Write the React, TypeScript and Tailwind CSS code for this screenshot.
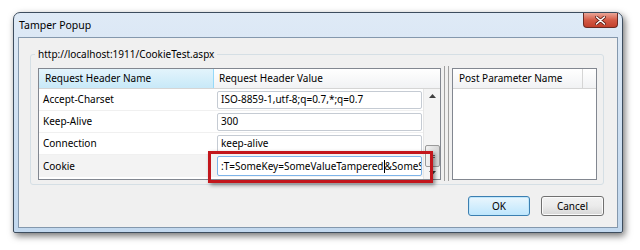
import React from "react";

const rows = [
  { name: "Accept-Charset", value: "ISO-8859-1,utf-8;q=0.7,*;q=0.7" },
  { name: "Keep-Alive", value: "300" },
  { name: "Connection", value: "keep-alive" },
];

export default function App() {
  return (
    <div className="relative w-[640px] h-[250px] bg-white overflow-hidden font-['Noto_Sans',sans-serif] text-[10px] text-black">
      {/* Window */}
      <div className="absolute left-[13px] top-[12px] w-[610px] h-[221px] rounded-t-[7px] rounded-b-[2px] border border-[#3d4d5e] bg-gradient-to-b from-[#dfeaf6] via-[#cfe0f2] to-[#c2d8ee] shadow-[2px_3px_7px_rgba(0,0,0,0.55)] flex flex-col">
        {/* Title bar */}
        <div className="h-[24px] flex items-start justify-between">
          <div className="pl-[5px] pt-[5px] text-[10.5px] leading-[14px] text-black">Tamper Popup</div>
          <div className="mr-[4px] w-[35px] h-[15px] rounded-b-[4px] border border-t-0 border-[#6b2a22] bg-gradient-to-b from-[#e9a597] via-[#d45a45] to-[#c2402c] flex items-center justify-center">
            <svg width="11" height="9" viewBox="0 0 11 9">
              <path d="M1.5 1 L9.5 8 M9.5 1 L1.5 8" stroke="#5a1a12" strokeWidth="3" strokeLinecap="round" />
              <path d="M1.5 1 L9.5 8 M9.5 1 L1.5 8" stroke="#ffffff" strokeWidth="1.6" strokeLinecap="round" />
            </svg>
          </div>
        </div>
        {/* Client */}
        <div className="mx-[4px] mb-[4px] flex-1 border border-[#8498ad] bg-[#f0f0f0] flex flex-col">
          {/* Group box */}
          <div className="relative ml-[11px] mt-[16px] w-[574px] h-[131px] rounded-[3px] border border-[#d5dfe5] flex pl-[7px] pr-[6px] pt-[13px] pb-[4px]">
            <div className="absolute left-[4px] top-[-8px] px-[3px] bg-[#f0f0f0] leading-[14px]">
              http://localhost:1911/CookieTest.aspx
            </div>
            {/* Left grid */}
            <div className="w-[403px] h-[112px] border border-[#828790] bg-white flex flex-col">
              <div className="h-[20px] flex border-b border-[#d5d5d5]">
                <div className="w-[175px] h-full bg-gradient-to-b from-[#e3f4fc] to-[#c8e9f8] border-r border-[#96d9f9] pl-[6px] flex items-center">
                  Request Header Name
                </div>
                <div className="flex-1 h-full bg-gradient-to-b from-[#ffffff] to-[#f1f2f4] pl-[5px] flex items-center">
                  Request Header Value
                </div>
              </div>
              <div className="flex flex-1 min-h-0">
                <div className="flex-1 flex flex-col">
                  {rows.map((r) => (
                    <div key={r.name} className="h-[22px] flex items-center border-b border-[#f0f0f0]">
                      <div className="w-[175px] pl-[4px]">{r.name}</div>
                      <div className="ml-[3px] w-[205px] h-[18px] rounded-[2px] border border-[#c5cbd3] bg-white pl-[3px] flex items-center overflow-hidden whitespace-nowrap">
                        {r.value}
                      </div>
                    </div>
                  ))}
                  <div className="h-[22px] flex items-center bg-[#f3f3f3]">
                    <div className="w-[175px] pl-[4px]">Cookie</div>
                    <div className="ml-[3px] w-[205px] h-[20px] rounded-[2px] border border-[#7eb4ea] bg-white pl-[3px] flex items-center overflow-hidden whitespace-nowrap">
                      <span>:T=SomeKey=SomeValueTampered</span>
                      <span className="inline-block w-px h-[13px] bg-black shrink-0" />
                      <span>&amp;SomeS</span>
                    </div>
                  </div>
                </div>
                {/* Scrollbar */}
                <div className="w-[17px] bg-[#f4f4f4] border-l border-[#e6e6e6] flex flex-col items-center">
                  <svg width="7" height="4" viewBox="0 0 7 4" className="mt-[5px]">
                    <path d="M0 4 L3.5 0 L7 4 Z" fill="#404040" />
                  </svg>
                  <div className="flex-1" />
                  <div className="w-[15px] h-[22px] rounded-[2px] border border-[#9a9a9a] bg-gradient-to-r from-[#f2f2f2] to-[#d6d6d6] flex flex-col items-center justify-center gap-[1px]">
                    <div className="w-[5px] h-px bg-[#707070]" />
                    <div className="w-[5px] h-px bg-[#707070]" />
                  </div>
                  <svg width="7" height="4" viewBox="0 0 7 4" className="mt-[4px] mb-[4px]">
                    <path d="M0 0 L3.5 4 L7 0 Z" fill="#404040" />
                  </svg>
                </div>
              </div>
            </div>
            {/* Splitter */}
            <div className="w-[11px] flex justify-center gap-[3px] -mt-[2px] h-[115px]">
              <div className="w-px h-full bg-[#a0a0a0]" />
              <div className="w-px h-full bg-[#a0a0a0]" />
            </div>
            {/* Right panel */}
            <div className="w-[145px] h-[112px] border border-[#828790] bg-white flex flex-col">
              <div className="h-[20px] flex border-b border-[#d5d5d5] bg-gradient-to-b from-[#ffffff] to-[#f1f2f4]">
                <div className="w-[130px] border-r border-[#d5d5d5] pl-[6px] flex items-center">Post Parameter Name</div>
                <div className="flex-1" />
              </div>
            </div>
          </div>
          {/* Buttons */}
          <div className="flex justify-end gap-[11px] mt-[11px] mr-[13px]">
            <div className="w-[62px] h-[20px] rounded-[3px] border border-[#3c7fb1] bg-gradient-to-b from-[#eaf6fd] to-[#bee6fd] shadow-[inset_0_0_0_1px_#bfe7fc] flex items-center justify-center">
              OK
            </div>
            <div className="w-[63px] h-[20px] rounded-[3px] border border-[#707070] bg-gradient-to-b from-[#f2f2f2] via-[#ebebeb] to-[#d6d6d6] shadow-[inset_0_0_0_1px_#fbfbfb] flex items-center justify-center">
              Cancel
            </div>
          </div>
        </div>
      </div>
      {/* Red highlight annotation */}
      <div className="absolute left-[208px] top-[151px] w-[225px] h-[32px] border-[3px] border-[#c3161c] shadow-[2px_2px_4px_rgba(0,0,0,0.45)]" />
    </div>
  );
}
